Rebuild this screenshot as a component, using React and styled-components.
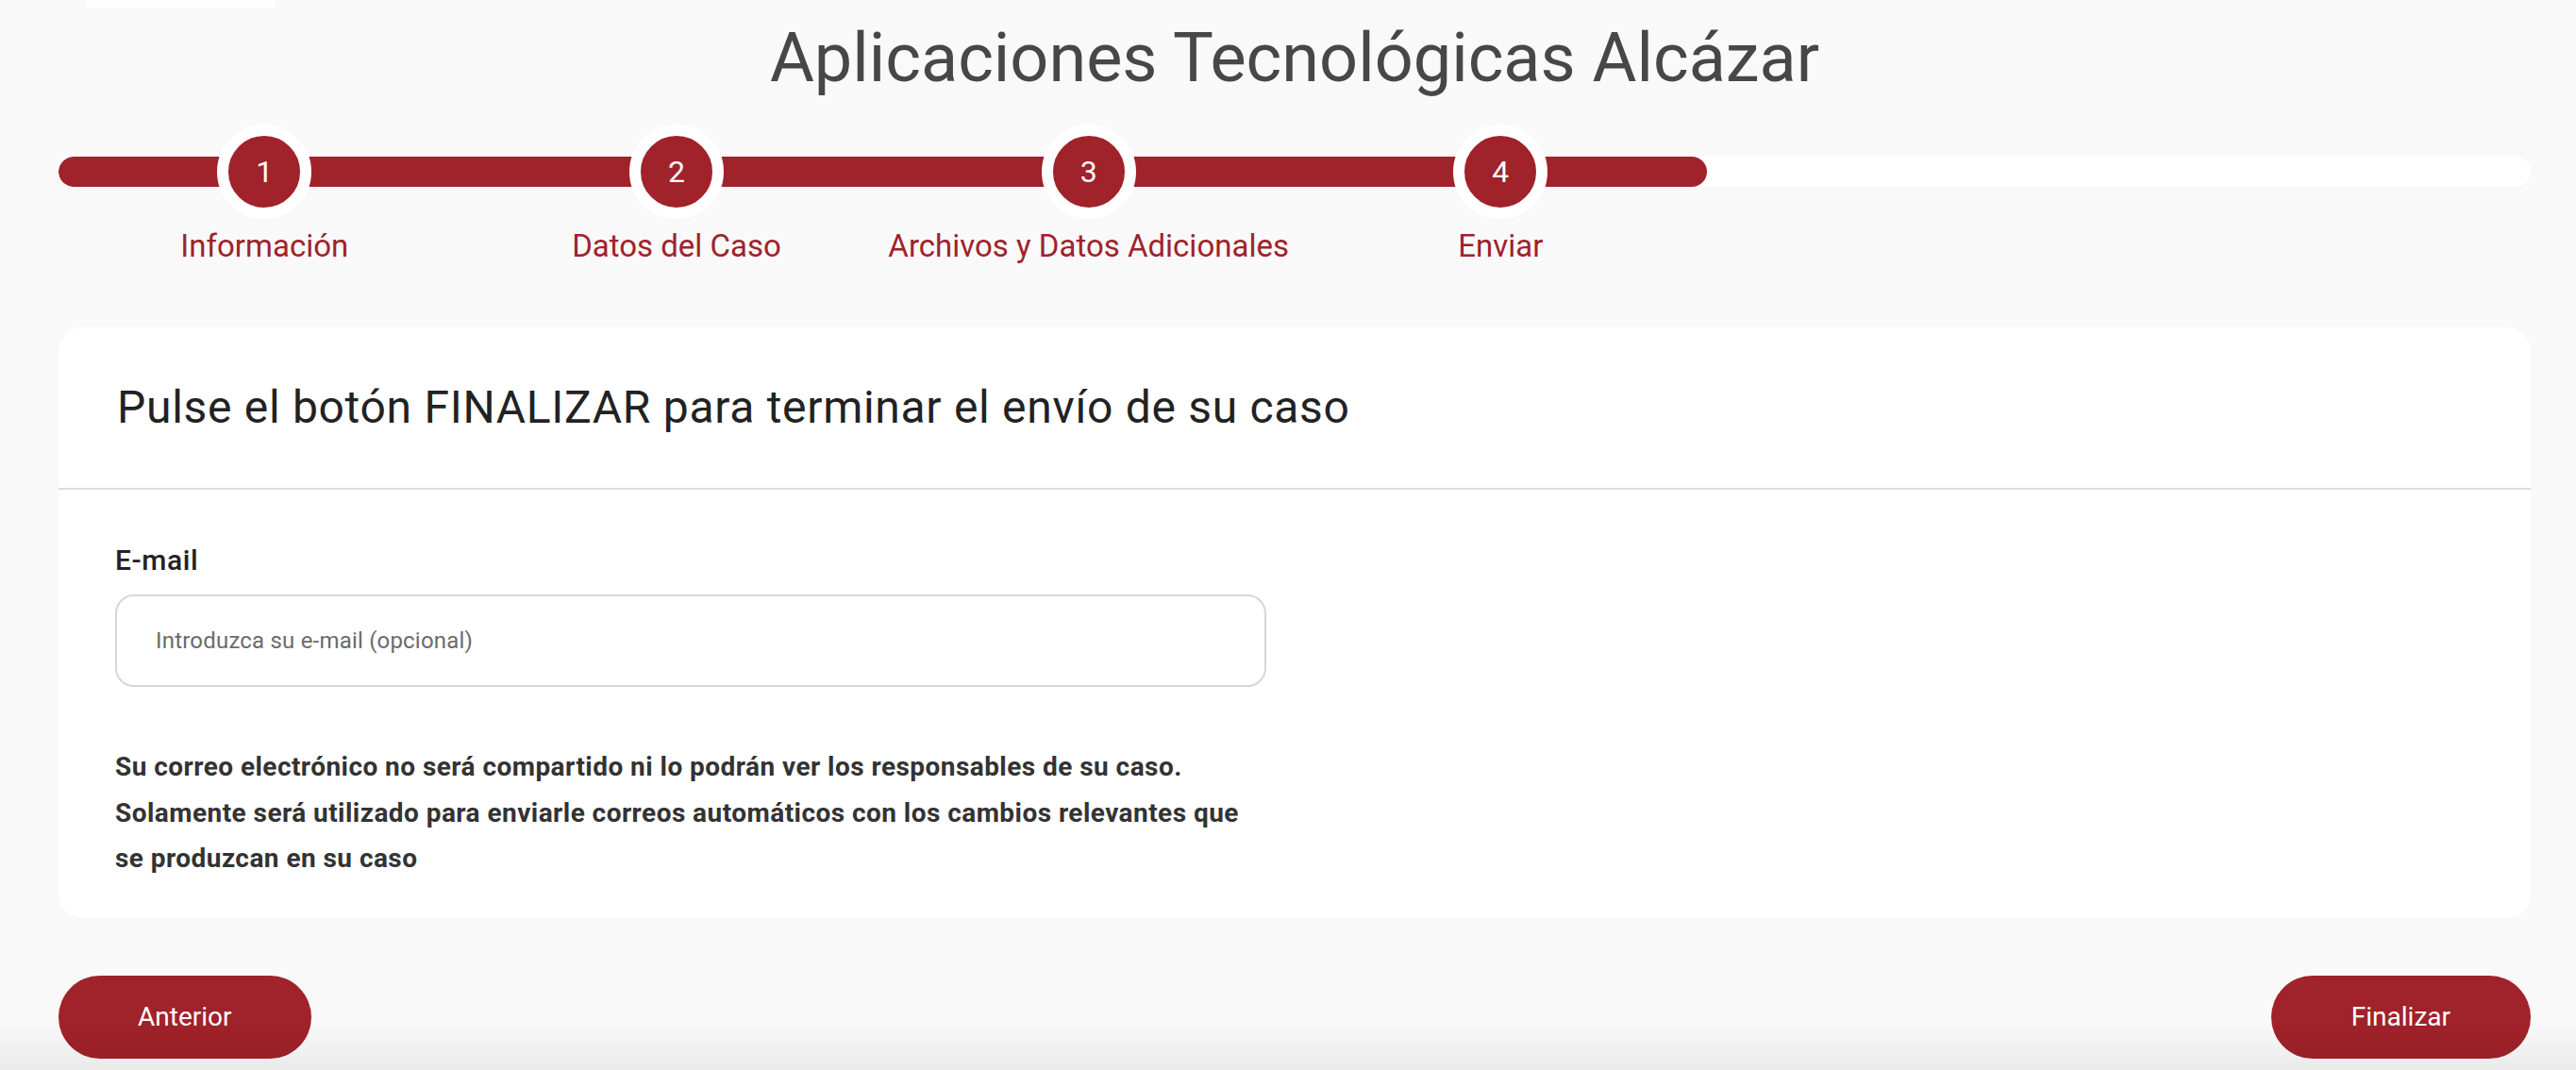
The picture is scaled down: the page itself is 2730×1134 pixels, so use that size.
import React from "react";
import styled, { createGlobalStyle } from "styled-components";

const RED = "#a0222a";

const GlobalStyle = createGlobalStyle`
  html, body {
    margin: 0;
    padding: 0;
    background: #f9f9f9;
    font-family: Roboto, "Liberation Sans", sans-serif;
  }
  body::after {
    content: "";
    position: fixed;
    left: 0;
    right: 0;
    bottom: 0;
    height: 50px;
    pointer-events: none;
    background: linear-gradient(rgba(0, 0, 0, 0), rgba(0, 0, 0, 0.06));
  }
`;

const Page = styled.div`
  padding: 0 48px 0 62px;
  box-sizing: border-box;
  width: 100%;
`;

const Header = styled.header`
  display: flex;
  flex-direction: column;
`;

const LogoStub = styled.div`
  width: 200px;
  height: 8px;
  margin-left: 30px;
  background: #ffffff;
`;

const Title = styled.h1`
  margin: 18px 0 0;
  font-size: 72px;
  line-height: 1;
  font-weight: 400;
  color: #474747;
  text-align: center;
`;

const Stepper = styled.div`
  position: relative;
  margin-top: 34px;
`;

const Track = styled.div`
  position: absolute;
  top: 34px;
  left: 0;
  right: 0;
  height: 32px;
  border-radius: 16px;
  background: #ffffff;
  overflow: hidden;
`;

const Fill = styled.div`
  height: 100%;
  border-radius: 16px;
  background: ${RED};
`;

const Steps = styled.div`
  position: relative;
  display: grid;
  grid-template-columns: repeat(6, 1fr);
`;

const Step = styled.div`
  display: flex;
  flex-direction: column;
  align-items: center;
`;

const Circle = styled.div`
  width: 76px;
  height: 76px;
  border: 12px solid #ffffff;
  border-radius: 50%;
  background: ${RED};
  color: #ffffff;
  display: flex;
  align-items: center;
  justify-content: center;
  font-size: 32px;
`;

const StepLabel = styled.div`
  margin-top: 12px;
  font-size: 33px;
  line-height: 1;
  color: ${RED};
  white-space: nowrap;
`;

const Card = styled.section`
  margin-top: 70px;
  background: #ffffff;
  border-radius: 26px;
`;

const CardHeader = styled.div`
  padding: 61px 62px 61px;
  border-bottom: 2px solid #dcdcdc;
`;

const CardTitle = styled.h2`
  margin: 0;
  font-size: 48px;
  line-height: 1;
  font-weight: 400;
  letter-spacing: 0.7px;
  color: #222222;
`;

const CardBody = styled.div`
  padding: 60px 60px 38px;
`;

const FieldLabel = styled.label`
  display: block;
  font-size: 30px;
  line-height: 1;
  font-weight: 500;
  letter-spacing: 0.6px;
  color: #222222;
`;

const Input = styled.input`
  display: block;
  margin-top: 21px;
  width: 1220px;
  height: 98px;
  box-sizing: border-box;
  padding: 0 41px;
  border: 2px solid #d6d6d6;
  border-radius: 20px;
  background: #ffffff;
  font-family: inherit;
  font-size: 24px;
  letter-spacing: 0.2px;
  color: #333333;
  outline: none;

  &::placeholder {
    color: #6b6b6b;
  }
`;

const Notice = styled.p`
  margin: 61px 0 0;
  font-size: 28px;
  line-height: 48.5px;
  font-weight: 700;
  letter-spacing: 0.45px;
  color: #333333;
`;

const Actions = styled.div`
  display: flex;
  justify-content: space-between;
  margin-top: 61px;
  padding-bottom: 12px;
`;

const Button = styled.button`
  height: 88px;
  padding: 0 ${(p) => p.$pad}px;
  border: none;
  border-radius: 44px;
  background: ${RED};
  color: #ffffff;
  font-family: inherit;
  font-size: 28px;
  cursor: pointer;
`;

const steps = ["Información", "Datos del Caso", "Archivos y Datos Adicionales", "Enviar"];

export default function App() {
  return (
    <>
      <GlobalStyle />
      <Page>
        <Header>
          <LogoStub />
          <Title>Aplicaciones Tecnológicas Alcázar</Title>
        </Header>

        <Stepper>
          <Track>
            <Fill style={{ width: `${(steps.length / 6) * 100}%` }} />
          </Track>
          <Steps>
            {steps.map((s, i) => (
              <Step key={s}>
                <Circle>{i + 1}</Circle>
                <StepLabel>{s}</StepLabel>
              </Step>
            ))}
          </Steps>
        </Stepper>

        <Card>
          <CardHeader>
            <CardTitle>Pulse el botón FINALIZAR para terminar el envío de su caso</CardTitle>
          </CardHeader>
          <CardBody>
            <FieldLabel htmlFor="email">E-mail</FieldLabel>
            <Input id="email" type="email" placeholder="Introduzca su e-mail (opcional)" />
            <Notice>
              Su correo electrónico no será compartido ni lo podrán ver los responsables de su caso.
              <br />
              Solamente será utilizado para enviarle correos automáticos con los cambios relevantes que
              <br />
              se produzcan en su caso
            </Notice>
          </CardBody>
        </Card>

        <Actions>
          <Button $pad={84}>Anterior</Button>
          <Button $pad={85}>Finalizar</Button>
        </Actions>
      </Page>
    </>
  );
}
